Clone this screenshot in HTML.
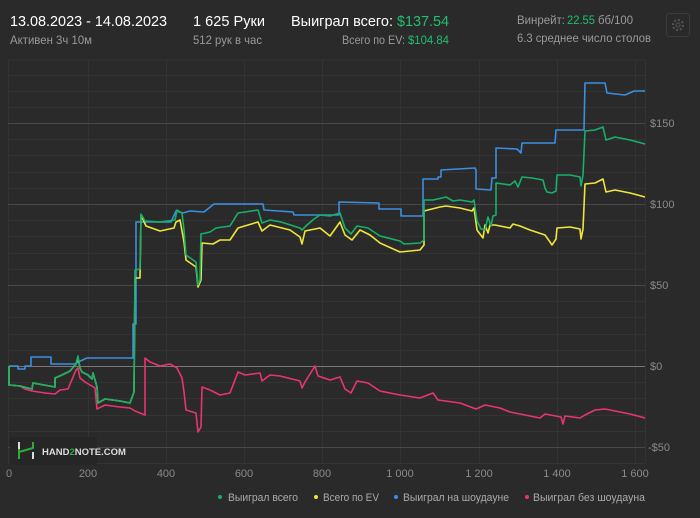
<!DOCTYPE html>
<html><head><meta charset="utf-8"><style>
body{margin:0;width:700px;height:518px;background:#2a2a2a;overflow:hidden;font-family:"Liberation Sans","DejaVu Sans",sans-serif;position:relative}
.t{position:absolute;white-space:nowrap}
</style></head><body>
<div class="t" style="left:666px;top:13px;width:22px;height:22px;border:1px solid #3c3c3c;border-radius:3px"></div>
<svg class="t" style="left:670px;top:17px" width="16" height="16" viewBox="0 0 16 16"><circle cx="8" cy="8" r="5" fill="none" stroke="#555" stroke-width="2" stroke-dasharray="2 1.9"/><circle cx="8" cy="8" r="2" fill="none" stroke="#555"/></svg>
<svg class="t" style="left:0;top:0" width="700" height="518">
<g font-family="Liberation Sans,sans-serif" lengthAdjust="spacingAndGlyphs">
<text x="10" y="26" fill="#fff" font-size="15" textLength="157" lengthAdjust="spacingAndGlyphs">13.08.2023 - 14.08.2023</text>
<text x="10" y="44" fill="#9a9a9a" font-size="12" textLength="82" lengthAdjust="spacingAndGlyphs">Активен 3ч 10м</text>
<text x="193" y="26" fill="#fff" font-size="15" textLength="72" lengthAdjust="spacingAndGlyphs">1 625 Руки</text>
<text x="193" y="44" fill="#9a9a9a" font-size="12" textLength="69" lengthAdjust="spacingAndGlyphs">512 рук в час</text>
<text x="291" y="26" fill="#fff" font-size="15" textLength="102" lengthAdjust="spacingAndGlyphs">Выиграл всего:</text>
<text x="397" y="26" fill="#1fbf6f" font-size="15" textLength="52" lengthAdjust="spacingAndGlyphs">$137.54</text>
<text x="342" y="44" fill="#9a9a9a" font-size="12" textLength="63" lengthAdjust="spacingAndGlyphs">Всего по EV:</text>
<text x="408" y="44" fill="#1fbf6f" font-size="12" textLength="41" lengthAdjust="spacingAndGlyphs">$104.84</text>
<text x="517" y="24" fill="#9a9a9a" font-size="12" textLength="48" lengthAdjust="spacingAndGlyphs">Винрейт:</text>
<text x="567" y="24" fill="#1fbf6f" font-size="12" textLength="28" lengthAdjust="spacingAndGlyphs">22.55</text>
<text x="598" y="24" fill="#9a9a9a" font-size="12" textLength="35" lengthAdjust="spacingAndGlyphs">бб/100</text>
<text x="517" y="42" fill="#9a9a9a" font-size="12" textLength="134" lengthAdjust="spacingAndGlyphs">6.3 среднее число столов</text>
</g>
<g stroke="#333" stroke-width="1">
<line x1="8" y1="60" x2="645" y2="60"/>
<line x1="8.5" y1="60" x2="8.5" y2="463"/><line x1="88.5" y1="60" x2="88.5" y2="463"/><line x1="166.5" y1="60" x2="166.5" y2="463"/><line x1="244.5" y1="60" x2="244.5" y2="463"/><line x1="322.5" y1="60" x2="322.5" y2="463"/><line x1="400.5" y1="60" x2="400.5" y2="463"/><line x1="479.5" y1="60" x2="479.5" y2="463"/><line x1="557.5" y1="60" x2="557.5" y2="463"/><line x1="635.5" y1="60" x2="635.5" y2="463"/><line x1="645.5" y1="60" x2="645.5" y2="463"/>
<line x1="8" y1="75.5" x2="645" y2="75.5"/><line x1="8" y1="91.5" x2="645" y2="91.5"/><line x1="8" y1="107.5" x2="645" y2="107.5"/>
<line x1="8" y1="139.5" x2="645" y2="139.5"/><line x1="8" y1="155.5" x2="645" y2="155.5"/><line x1="8" y1="172.5" x2="645" y2="172.5"/><line x1="8" y1="188.5" x2="645" y2="188.5"/>
<line x1="8" y1="220.5" x2="645" y2="220.5"/><line x1="8" y1="236.5" x2="645" y2="236.5"/><line x1="8" y1="253.5" x2="645" y2="253.5"/><line x1="8" y1="269.5" x2="645" y2="269.5"/>
<line x1="8" y1="301.5" x2="645" y2="301.5"/><line x1="8" y1="317.5" x2="645" y2="317.5"/><line x1="8" y1="334.5" x2="645" y2="334.5"/><line x1="8" y1="350.5" x2="645" y2="350.5"/>
<line x1="8" y1="382.5" x2="645" y2="382.5"/><line x1="8" y1="398.5" x2="645" y2="398.5"/><line x1="8" y1="415.5" x2="645" y2="415.5"/><line x1="8" y1="431.5" x2="645" y2="431.5"/>
<line x1="8" y1="463.5" x2="645" y2="463.5"/>
</g>
<g stroke="#484848"><line x1="8" y1="123.5" x2="645" y2="123.5"/><line x1="8" y1="204.5" x2="645" y2="204.5"/><line x1="8" y1="285.5" x2="645" y2="285.5"/><line x1="8" y1="447.5" x2="645" y2="447.5"/></g>
<line x1="8" y1="366.5" x2="645" y2="366.5" stroke="#777"/>
<g fill="none" stroke-width="1.6" stroke-linejoin="round">
<polyline stroke="#e8356f" points="9,385 20,386 25,389 32,391 45,393 55,394 60,390 68,389 76,370 78,368 80,378 85,382 95,388 97,409 105,405 120,407 130,408 135,411 145,415 145,358 150,362 160,366 170,364 177,368 182,378 184,392 186,410 196,413 198,432 201,427 202,387 210,390 220,395 230,393 238,372 245,375 260,373 262,381 270,375 280,376 300,381 302,388 305,382 315,366 318,376 330,380 340,377 345,389 351,393 357,381 368,383 380,391 400,395 420,398 433,393 438,400 460,403 476,409 485,405 500,408 510,412 540,418 545,414 561,417 563,424 565,416 580,418 585,415 595,410 605,409 630,414 645,418"/>
<polyline stroke="#3b8fe0" points="9,366 18,366 18,369 25,369 25,366 31,366 31,357 51,357 51,364 75,364 78,362 87,358 133,358 133,324 136,324 136,222 171,222 176,211 183,213 190,211 204,212 214,204 263,204 264,210 293,212 294,215 339,215 339,202 379,203 379,209 401,209 401,216 423,216 423,179 438,179 438,177 441,177 441,170 475,168 476,170 476,189 491,190 492,178 496,178 496,148 517,149 521,153 522,143 555,143 556,130 584,130 585,83 605,83 607,93 625,95 634,91 645,91"/>
<polyline stroke="#f0e63a" points="9,366 9,385 20,386 32,389 33,383 55,387 55,378 62,375 70,371 76,364 78,358 80,368 82,372 88,375 92,379 93,373 97,387 98,403 105,399 120,401 130,403 134,392 135,278 140,278 141,215 146,226 160,231 174,228 176,222 180,220 184,242 186,260 196,267 198,287 201,280 202,243 213,244 220,240 230,240 238,228 258,222 262,231 270,225 290,230 300,237 302,244 305,231 320,228 330,236 340,222 345,235 352,240 360,230 370,235 380,243 400,252 420,250 424,245 424,211 440,207 446,206 460,208 472,211 474,208 477,230 483,238 485,225 488,233 490,225 495,225 510,228 513,224 520,226 530,230 545,235 550,242 552,245 556,239 557,228 570,227 580,229 581,239 583,229 585,184 595,183 603,179 606,192 615,190 630,193 645,197"/>
<polyline stroke="#17b06a" points="9,366 9,385 20,386 32,389 33,383 55,387 55,378 62,375 70,371 76,364 78,356 80,368 82,372 88,375 92,379 93,373 97,387 98,403 105,399 120,401 130,403 134,392 135,270 140,269 141,214 145,221 160,222 175,220 177,210 182,213 184,230 186,255 196,262 198,285 200,280 201,234 210,232 216,228 230,226 238,213 245,212 258,210 262,223 270,220 281,222 300,228 302,230 307,225 314,219 320,215 330,216 340,213 345,228 351,234 357,226 368,228 380,236 400,241 404,244 420,243 424,240 424,200 433,200 442,198 446,197 453,201 460,200 472,202 474,200 477,221 481,229 485,230 488,217 491,226 493,216 496,215 496,183 510,185 515,181 518,187 522,177 532,178 543,180 545,188 547,192 552,193 556,191 557,175 570,175 580,177 581,186 583,175 585,131 595,130 603,127 606,140 615,137 630,140 645,144"/>
</g>
<g fill="#8a8a8a" font-size="11" font-family="Liberation Sans,sans-serif">
<text x="650" y="127">$150</text><text x="650" y="208">$100</text><text x="650" y="289">$50</text><text x="650" y="370">$0</text><text x="648" y="451">-$50</text>
<g text-anchor="middle"><text x="9" y="477">0</text><text x="88" y="477">200</text><text x="166" y="477">400</text><text x="244" y="477">600</text><text x="322" y="477">800</text><text x="400" y="477">1 000</text><text x="479" y="477">1 200</text><text x="557" y="477">1 400</text><text x="635" y="477">1 600</text></g>
</g>
<rect x="10" y="437" width="87" height="28" fill="#262626"/>
<g stroke="#ddd" stroke-width="2"><line x1="19" y1="442" x2="19" y2="449"/><line x1="33" y1="452" x2="33" y2="459"/></g>
<g stroke="#2eab3a" stroke-width="2" fill="none"><polyline points="19,449 19,452 33,448 33,442"/><line x1="19" y1="452" x2="19" y2="459"/></g>
<text x="42" y="455" fill="#ddd" font-size="9.5" font-weight="bold" font-family="Liberation Sans,sans-serif">HAND<tspan fill="#2eab3a">2</tspan>NOTE.COM</text>
<g font-size="11" fill="#aaa" font-family="Liberation Sans,sans-serif">
<circle cx="220" cy="497" r="2" fill="#17b06a"/><text x="228" y="501" textLength="70" lengthAdjust="spacingAndGlyphs">Выиграл всего</text>
<circle cx="316" cy="497" r="2" fill="#f0e63a"/><text x="323" y="501" textLength="56" lengthAdjust="spacingAndGlyphs">Всего по EV</text>
<circle cx="396" cy="497" r="2" fill="#3b8fe0"/><text x="403" y="501" textLength="106" lengthAdjust="spacingAndGlyphs">Выиграл на шоудауне</text>
<circle cx="527" cy="497" r="2" fill="#e8356f"/><text x="533" y="501" textLength="112" lengthAdjust="spacingAndGlyphs">Выиграл без шоудауна</text>
</g>
</svg>
</body></html>
